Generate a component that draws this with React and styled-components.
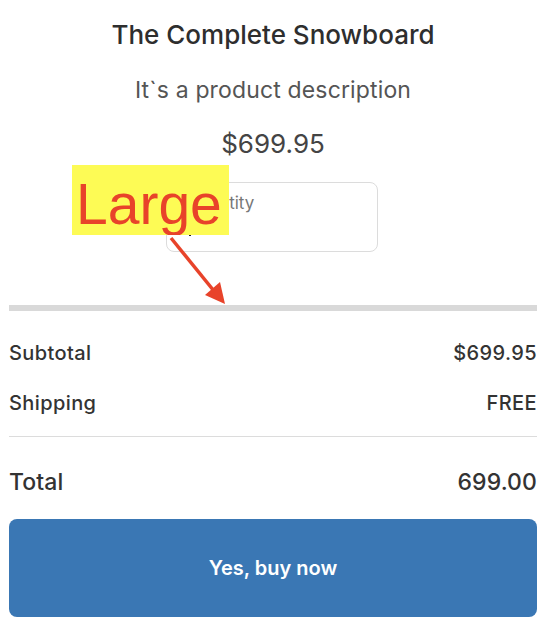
import styled, { createGlobalStyle } from 'styled-components';

const GlobalStyle = createGlobalStyle`
    body {
        margin: 0;
        background: #fff;
        font-family: Inter, "Noto Sans", sans-serif;
        color: #303030;
    }
`;

const App = () => {
    return (
        <Page>
            <GlobalStyle />
            <Product>
                <Title>The Complete Snowboard</Title>
                <Description>It`s a product description</Description>
                <Price>$699.95</Price>
                <QuantityField>
                    <FieldLabel>Quantity</FieldLabel>
                    <Caret />
                </QuantityField>
            </Product>

            <ThickRule />

            <Summary>
                <Row>
                    <span>Subtotal</span>
                    <span>$699.95</span>
                </Row>
                <Row>
                    <span>Shipping</span>
                    <span>FREE</span>
                </Row>
                <ThinRule />
                <Row $total>
                    <span>Total</span>
                    <span>699.00</span>
                </Row>
            </Summary>

            <BuyButton>Yes, buy now</BuyButton>

            {/* annotation drawn over the screenshot */}
            <Callout>Large</Callout>
            <Arrow width="548" height="632" viewBox="0 0 548 632">
                <line x1="171" y1="238" x2="214" y2="291" stroke="#e8432a" strokeWidth="3.5" />
                <polygon points="225,304 205,295 220,282" fill="#e8432a" />
            </Arrow>
        </Page>
    );
};

export default App;

const Page = styled.div`
    position: relative;
    width: 548px;
    height: 632px;
    padding: 0 11px 0 9px;
    box-sizing: border-box;
    overflow: hidden;
`;

const Product = styled.div`
    display: flex;
    flex-direction: column;
    align-items: center;
    padding-top: 19px;
`;

const Title = styled.h1`
    margin: 0;
    font-size: 26px;
    font-weight: 500;
    line-height: 32px;
    color: #2e2e2e;
`;

const Description = styled.p`
    margin: 24px 0 0;
    font-size: 23px;
    font-weight: 400;
    letter-spacing: 0.15px;
    line-height: 30px;
    color: #555;
`;

const Price = styled.div`
    margin-top: 23px;
    font-size: 26px;
    line-height: 32px;
    color: #444;
`;

const QuantityField = styled.div`
    position: relative;
    margin-top: 22px;
    margin-left: -3px;
    width: 212px;
    height: 70px;
    box-sizing: border-box;
    border: 1px solid #dcdcdc;
    border-radius: 8px;
    padding: 9px 0 0 20px;
`;

const FieldLabel = styled.div`
    font-size: 17px;
    line-height: 22px;
    color: #777;
`;

const Caret = styled.div`
    margin-top: 19px;
    width: 2px;
    height: 3px;
    background: #222;
    margin-left: 2px;
`;

const ThickRule = styled.div`
    margin-top: 53px;
    height: 6px;
    background: #d9d9d9;
`;

const Summary = styled.div`
    display: flex;
    flex-direction: column;
    padding-top: 29px;
`;

const Row = styled.div`
    display: flex;
    justify-content: space-between;
    align-items: center;
    height: ${(p) => (p.$total ? '30px' : '26px')};
    margin-bottom: ${(p) => (p.$total ? '22px' : '24px')};
    margin-top: ${(p) => (p.$total ? '30px' : '0')};
    font-size: ${(p) => (p.$total ? '23px' : '20px')};
    letter-spacing: ${(p) => (p.$total ? '0.1px' : '0.4px')};
    font-weight: 500;
    color: #333;
`;

const ThinRule = styled.div`
    height: 1px;
    background: #dcdcdc;
    margin-top: -4px;
`;

const BuyButton = styled.button`
    display: block;
    width: 100%;
    height: 98px;
    border: none;
    border-radius: 8px;
    background: #3a77b4;
    color: #fff;
    font-family: Inter, "Noto Sans", sans-serif;
    font-size: 20px;
    font-weight: 600;
`;

const Callout = styled.div`
    position: absolute;
    left: 72px;
    top: 165px;
    width: 157px;
    height: 70px;
    background: #fdfb55;
    color: #e8432a;
    font-family: "Liberation Sans", Arial, sans-serif;
    font-size: 57px;
    line-height: 78px;
    padding-left: 4px;
    box-sizing: border-box;
    overflow: hidden;
`;

const Arrow = styled.svg`
    position: absolute;
    left: 0;
    top: 0;
    pointer-events: none;
`;
